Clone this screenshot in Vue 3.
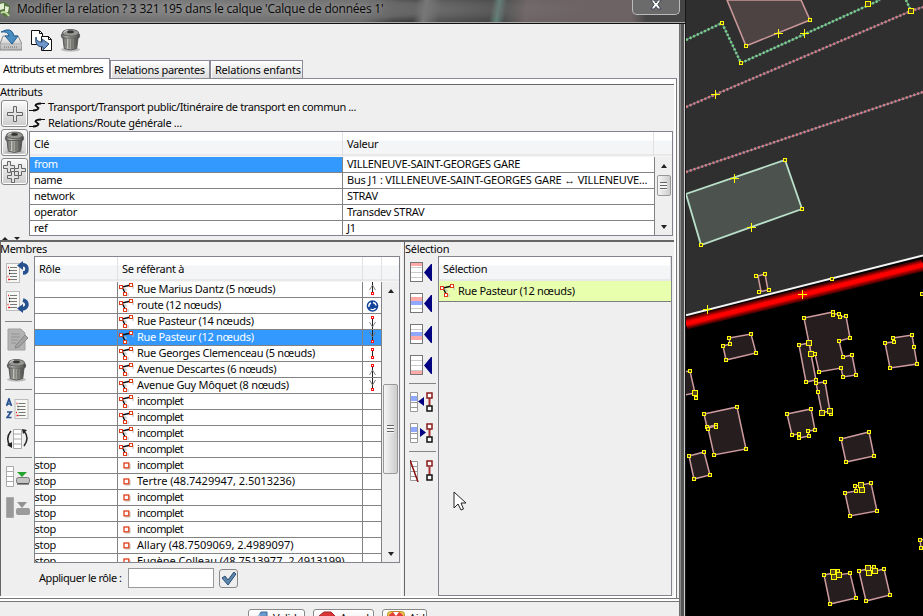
<script setup>
const attributes = [
  ['from', 'VILLENEUVE-SAINT-GEORGES GARE'],
  ['name', 'Bus J1 : VILLENEUVE-SAINT-GEORGES GARE ↔ VILLENEUVE...'],
  ['network', 'STRAV'],
  ['operator', 'Transdev STRAV'],
  ['ref', 'J1'],
]

const members = [
  { ref: 'Rue Marius Dantz (5 nœuds)', link: 'up-end' },
  { ref: 'route (12 nœuds)', link: 'round' },
  { ref: 'Rue Pasteur (14 nœuds)', link: 'down-start' },
  { ref: 'Rue Pasteur (12 nœuds)', link: 'down-end', selected: true },
  { ref: 'Rue Georges Clemenceau (5 nœuds)', link: 'single' },
  { ref: 'Avenue Descartes (6 nœuds)', link: 'up-start' },
  { ref: 'Avenue Guy Môquet (8 nœuds)', link: 'down-end' },
  { ref: 'incomplet' },
  { ref: 'incomplet' },
  { ref: 'incomplet' },
  { ref: 'incomplet' },
  { role: 'stop', ref: 'incomplet' },
  { role: 'stop', ref: 'Tertre (48.7429947, 2.5013236)' },
  { role: 'stop', ref: 'incomplet' },
  { role: 'stop', ref: 'incomplet' },
  { role: 'stop', ref: 'incomplet' },
  { role: 'stop', ref: 'Allary (48.7509069, 2.4989097)' },
  { role: 'stop', ref: 'Eugène Colleau (48.7513977, 2.4913199)' },
]

const insertIcons = [
  { pink: 0 },
  { pink: 4, blue: 8 },
  { blue: 8, pink: 12 },
  { pink: 16 },
]

const buildings = [
  '758,276 765,274 768,290 761,291.5',
  '729,338 751,334 756,353 726,360 723,346 730,344',
  '804,318 833,312 833,314 839,314 840,317 846,316 850,338 839,341 843,357 852,355 856,375 843,377 841,368 819,372 815,354 811,353',
  '799,345 809,343 811,354 816,380 806,382',
  '816,383 825,382 830,411 822,413',
  '885,343 893,342 893,338 912,335 917,364 890,368',
  '680,372 690,371 695,393 680,396',
  '704,414 737,407 746,449 714,455 708,428 716,426 716,425 707,427',
  '787,414 811,409 815,430 808,431 809,436 799,438 799,434 792,435',
  '841,439 869,432 874,456 846,462',
  '689,456 704,452 710,475 694,479',
  '845,493 856,491 855,486 871,483 877,511 850,516',
  '824,575 833,573 838,571 839,575 850,573 856,598 830,604',
  '859,571 867,569 874,567 876,571 884,569 890,595 866,601',
  '920,540 930,538 930,547 921,548',
]

const nodes = [
  [722, 23], [741, 63], [810, 20], [746, 46], [785, 160], [802, 209], [701, 245],
  [756, 276], [765, 274], [769, 290], [759, 292], [832, 279], [922, 294],
  [729, 338], [751, 334], [756, 353], [726, 360], [723, 346], [730, 344],
  [804, 318], [833, 312], [833, 315], [839, 314], [840, 317], [846, 316], [850, 338], [839, 341],
  [843, 357], [852, 355], [856, 375], [843, 377], [841, 368], [819, 372], [815, 354],
  [799, 345], [806, 382], [816, 380], [816, 383], [825, 382], [818, 392], [823, 414], [831, 414],
  [885, 343], [894, 342], [893, 338], [912, 335], [914, 347], [917, 364], [890, 368],
  [690, 371], [696, 398], [704, 414], [737, 407], [746, 449], [714, 455], [707, 427], [716, 425], [716, 427], [708, 429],
  [787, 414], [811, 409], [815, 430], [808, 431], [809, 436], [799, 438], [799, 434], [792, 435],
  [841, 439], [869, 432], [874, 456], [846, 462], [689, 456], [704, 452], [710, 475], [694, 479],
  [845, 493], [856, 491], [855, 486], [871, 483], [877, 511], [850, 516],
  [824, 575], [838, 571], [850, 573], [856, 598], [830, 604],
  [859, 571], [874, 567], [884, 569], [890, 595], [866, 601], [920, 540], [921, 548],
]

const junctions = [
  [868, 4], [911, 11], [809, 343], [811, 354], [695, 393], [822, 413], [830, 411],
  [861, 485], [862, 490], [833, 572], [839, 575], [834, 577], [868, 568], [875, 571], [869, 573],
]

const crosses = [[778, 33], [804, 33], [715, 94], [734, 178], [751, 227], [802, 294], [707, 309]]
</script>

<template>
  <div class="screen">
    <svg class="defs" width="0" height="0" aria-hidden="true">
      <defs>
        <linearGradient id="steel" x1="0" x2="1">
          <stop offset="0" stop-color="#555" /><stop offset=".3" stop-color="#c4c4bf" />
          <stop offset=".65" stop-color="#85857f" /><stop offset="1" stop-color="#444" />
        </linearGradient>
        <linearGradient id="disk" x1="0" y1="0" x2="0" y2="1">
          <stop offset="0" stop-color="#f5f5f5" /><stop offset="1" stop-color="#b5b5b5" />
        </linearGradient>
        <symbol id="trash" viewBox="0 0 22 24">
          <ellipse cx="11" cy="22" rx="10" ry="2" fill="#bbb" />
          <path d="M3 9h16l-1.500 12q-6.500 3-13 0z" fill="url(#steel)" stroke="#555" />
          <path d="M6.500 11v9M9.500 11v10M12.500 11v10M15.500 11v9" stroke="#5b5b57" stroke-width=".8" />
          <rect x="1.500" y="5" width="19" height="5" rx="2" fill="url(#steel)" stroke="#555" />
          <ellipse cx="11" cy="4.500" rx="8.500" ry="3.500" fill="#969692" stroke="#5a5a5a" />
          <ellipse cx="11" cy="3.500" rx="3.500" ry="1.500" fill="#353535" />
          <path d="M4 4q2-2 4-2" stroke="#e4e4e0" fill="none" />
        </symbol>
        <symbol id="way" viewBox="0 0 15 14">
          <path d="M3 4 12 2M3 4 7 11.500" stroke="#111" stroke-width="1.500" fill="none" />
          <path d="M5 6h2v2M13 5h2v-3M9 13v-3" stroke="#bbb" fill="none" />
          <g fill="#fff" stroke="#e03b16" stroke-width="1">
            <rect x=".5" y="2.500" width="3" height="3" /><rect x="10.500" y=".5" width="3" height="3" />
            <rect x="4.500" y="9.500" width="3" height="3" />
          </g>
        </symbol>
        <symbol id="node" viewBox="0 0 15 14">
          <path d="M6 10h5V5" stroke="#bbb" fill="none" />
          <rect x="5" y="4" width="4.800" height="4.800" fill="#fff" stroke="#e03b16" stroke-width="1.300" />
        </symbol>
        <symbol id="list" viewBox="0 0 14 20">
          <rect x=".5" y=".5" width="13" height="19" fill="#f7f7f4" stroke="#bbb" />
          <path d="M4 4.500h7M4 7.500h7M4 10.500h7M4 13.500h7M4 16.500h7" stroke="#777" />
          <path d="M2 4.500h1M1.500 13.500h1M2 16.500h2" stroke="#e22" stroke-width="1.500" />
          <path d="M3 7.500h1M3 10.500h1" stroke="#111" stroke-width="1.500" />
        </symbol>
        <symbol id="plus" viewBox="0 0 18 18">
          <path d="M7.500 1.500h3v6h6v3h-6v6h-3v-6h-6v-3h6z" fill="#e4e4e4" stroke="#666" />
        </symbol>
        <symbol id="preset" viewBox="0 0 16 10">
          <path d="M0 8.500h6M10 1.500h6" fill="none" stroke="#111" stroke-width="1" />
          <path d="M12 1.500Q7 1.500 6.500 3.500L9.500 6Q9 8.300 4 8.500" fill="none" stroke="#111" stroke-width="1.800" />
        </symbol>
      </defs>
    </svg>

    <section class="dialog">
      <header class="titlebar">
        <svg class="app-icon" width="11" height="18" viewBox="0 0 11 18">
          <path d="M0 2 4 1 10 5 9 15 5 16 0 11z" fill="#53743f" />
          <path d="M0 3 4 2 4 8 0 9zM5 5l4 1-1 5H5z" fill="#e4eed2" />
          <path d="M1 12q4-3 8 3" stroke="#bcd695" stroke-width="2" fill="none" />
        </svg>
        <span class="title">Modifier la relation ? 3 321 195 dans le calque 'Calque de données 1'</span>
        <span class="close">
          <svg width="12" height="10" viewBox="0 0 12 10"><path d="M1 0h3l2 3 2-3h3L8 4.500 11 9H8L6 6.500 4 9H1l3-4.500z" fill="#fff" stroke="#3d4252" /></svg>
        </span>
      </header>

      <div class="client">
        <div class="toolbar">
          <svg width="22" height="22" viewBox="0 0 22 22">
            <path d="M3 7h15l4 8v6H0v-6z" fill="url(#disk)" stroke="#888" />
            <path d="M1 15h20" stroke="#aaa" /><path d="M4 18h14" stroke="#999" stroke-width="2" stroke-dasharray="1 1" />
            <path d="M1 3Q12-3 14 7h4l-6 8-7-8h4Q8 2 1 3z" fill="#4a8dc0" stroke="#245e92" />
          </svg>
          <svg width="22" height="23" viewBox="0 0 22 23">
            <path d="M.5 1.500h8l3 3v11H.5z" fill="#fff" stroke="#111" /><path d="M8.500 1.500v3h3" fill="none" stroke="#111" />
            <path d="M10.500 7.500h7l3 3v11h-10z" fill="#fff" stroke="#111" /><path d="M17.500 7.500v3h3" fill="none" stroke="#111" />
            <path d="M5 8q0 5 6 5v-3l7 5-6 6v-3Q3 18 5 8z" fill="#6f96c9" stroke="#274873" />
          </svg>
          <svg class="delete" width="21" height="24"><use href="#trash" /></svg>
        </div>

        <nav class="tabs">
          <span class="tab active">Attributs et membres</span>
          <span class="tab parents">Relations parentes</span>
          <span class="tab children">Relations enfants</span>
        </nav>

        <main class="content">
          <section class="attributes">
            <div class="caption">Attributs</div>
            <div class="attr-body">
              <div class="attr-tools">
                <span class="square"><svg width="18" height="18"><use href="#plus" /></svg></span>
                <span class="square"><svg width="21" height="23"><use href="#trash" /></svg></span>
                <span class="square">
                  <svg width="25" height="24" viewBox="0 0 25 24">
                    <g fill="#e4e4e4" stroke="#666">
                      <path d="M5.500 1.500h3v4h4v3h-4v4h-3v-4h-4v-3h4z" /><path d="M16.500 4.500h3v4h4v3h-4v4h-3v-4h-4v-3h4z" />
                      <path d="M9.500 11.500h3v4h4v3h-4v4h-3v-4h-4v-3h4z" />
                    </g>
                  </svg>
                </span>
              </div>
              <div class="attr-main">
                <div class="preset"><svg width="16" height="10"><use href="#preset" /></svg><span class="path">Transport/Transport public/Itinéraire de transport en commun ...</span></div>
                <div class="preset"><svg width="16" height="10"><use href="#preset" /></svg><span>Relations/Route générale ...</span></div>
                <div class="table attr-table">
                  <div class="thead"><span>Clé</span><span>Valeur</span></div>
                  <div class="tbody">
                    <div class="rows">
                      <div v-for="(a, i) in attributes" :key="a[0]" class="row">
                        <span :class="{ selected: i === 0 }">{{ a[0] }}</span><span :class="{ long: i === 1 }">{{ a[1] }}</span>
                      </div>
                    </div>
                    <div class="scroll">
                      <i class="arrow up"></i><i class="thumb"></i><i class="arrow down"></i>
                    </div>
                  </div>
                </div>
              </div>
            </div>
          </section>

          <div class="divider"><i class="arrow up"></i><i class="arrow down"></i></div>

          <section class="lower">
            <div class="members">
              <div class="caption">Membres</div>
              <div class="members-body">
                <div class="side-tools">
                  <svg width="24" height="23" viewBox="0 0 24 23"><use href="#list" y="2" width="14" height="20" /><path d="M15 4q6-1 6 4 0 4-4 4" fill="none" stroke="#27508f" stroke-width="3.500" /><path d="M17 0v9l-6-4.500z" fill="#27508f" /></svg>
                  <svg width="24" height="23" viewBox="0 0 24 23"><use href="#list" y="0" width="14" height="20" /><path d="M17 9q4 1 4 5-1 4-6 4" fill="none" stroke="#27508f" stroke-width="3.500" /><path d="M17 13v9l-6-4.500z" fill="#27508f" /></svg>
                  <hr />
                  <svg width="24" height="23" viewBox="0 0 24 23"><path d="M2 1h13l4 4v17H2z" fill="#b3b3b3" stroke="#a0a0a0" /><path d="M5 6h9M5 9h9M5 12h7M5 15h5" stroke="#929292" /><path d="m10 17 9-10 3 3-9 9-4 1z" fill="#a2a2a2" stroke="#888" /></svg>
                  <svg width="22" height="24" viewBox="0 0 22 24"><use href="#trash" width="21" height="24" /></svg>
                  <hr />
                  <svg width="24" height="22" viewBox="0 0 24 22"><use href="#list" x="8" y="1" width="15" height="20" /><path d="M.5 8 3 1l2.500 7M1.500 6h3M1 14h4l-4 5.500h4.500" fill="none" stroke="#27508f" stroke-width="1.700" /></svg>
                  <svg width="24" height="22" viewBox="0 0 24 22"><path d="M7.500 1.500h8v19h-8zM7.500 6h8M7.500 11h8M7.500 16h8" fill="#fff" stroke="#aaa" /><path d="M5 3Q-1 10 4 18M18 3q6 7 0 15" fill="none" stroke="#222" stroke-width="1.500" /><path d="m1 17 5 3V14zM16 1l5 1-4 4z" fill="#222" /></svg>
                  <hr />
                  <svg width="24" height="22" viewBox="0 0 24 22"><path d="M.5.500h7v20h-7zM.5 5.500h7M.5 10.500h7M.5 15.500h7" fill="#fff" stroke="#aaa" /><rect x="10.500" y="11.500" width="13" height="6" rx="2" fill="#c3c3c3" stroke="#777" /><path d="M11 18h12" stroke="#333" /><path d="M11 6h10l-5 5z" fill="#24a32e" /></svg>
                  <svg width="24" height="22" viewBox="0 0 24 22"><path d="M.5.500h7v20h-7z" fill="#999" stroke="#aaa" /><rect x="10" y="11" width="14" height="7" rx="2" fill="#9b9b9b" /><path d="M11 5h10l-5 6z" fill="#929292" /></svg>
                </div>
                <div class="table member-table">
                  <div class="thead"><span>Rôle</span><span>Se réfèrant à</span><span></span></div>
                  <div class="tbody">
                    <div class="rows">
                      <div v-for="(m, i) in members" :key="i" class="row" :class="{ selected: m.selected }">
                        <span class="role">{{ m.role }}</span>
                        <span class="ref"><svg width="15" height="14"><use :href="m.role ? '#node' : '#way'" /></svg><em :class="{ coords: i > 11 && m.ref !== 'incomplet', partial: m.ref === 'incomplet' }">{{ m.ref }}</em></span>
                        <span class="link">
                          <svg v-if="m.link" width="15" height="16" viewBox="0 0 15 16">
                            <g v-if="m.link === 'round'">
                              <circle cx="7.500" cy="8" r="5.800" fill="#12439b" /><path d="M4 9a3.500 3.500 0 0 1 2-4M8 4.500a3.500 3.500 0 0 1 3 3M10.500 10a3.500 3.500 0 0 1-5 1" fill="none" stroke="#fff" stroke-width="1.400" />
                            </g>
                            <g v-else>
                              <path v-if="m.link === 'up-end' || m.link === 'down-end'" d="M7.500 0V11" stroke="#222" />
                              <path v-else-if="m.link === 'single'" d="M7.500 4V12" stroke="#222" />
                              <path v-else d="M7.500 5V16" stroke="#222" />
                              <path v-if="m.link === 'up-end'" d="m4.500 8 3-5 3 5" fill="none" stroke="#888" />
                              <path v-if="m.link === 'down-end'" d="m4.500 2 3 5 3-5" fill="none" stroke="#777" />
                              <path v-if="m.link === 'down-start'" d="m4.500 8 3 5 3-5" fill="none" stroke="#888" />
                              <path v-if="m.link === 'up-start'" d="m4.500 13 3-5 3 5" fill="none" stroke="#888" />
                              <rect v-if="m.link !== 'up-end' && m.link !== 'down-end'" x="6.500" y="2.500" width="2" height="2" fill="#fff" stroke="#f11" />
                              <rect v-if="m.link === 'up-end' || m.link === 'down-end' || m.link === 'single'" x="6.500" y="10.500" width="2" height="2" fill="#fff" stroke="#f11" />
                            </g>
                          </svg>
                        </span>
                      </div>
                    </div>
                    <div class="scroll"><i class="arrow up"></i><i class="thumb"></i><i class="arrow down"></i></div>
                  </div>
                </div>
              </div>
              <div class="role-form">
                <label>Appliquer le rôle :</label><span class="input"></span>
                <span class="apply"><svg width="16" height="15" viewBox="0 0 16 15"><path d="m1 7 3-2 3 4 6-8 2 2-8 11z" fill="#5d86ad" stroke="#284d72" /></svg></span>
              </div>
            </div>

            <div class="selection">
              <div class="caption">Sélection</div>
              <div class="selection-body">
                <div class="side-tools">
                  <svg v-for="(s, i) in insertIcons" :key="i" width="23" height="21" viewBox="0 0 23 21">
                    <rect x="1" y=".5" width="12" height="19" fill="#fff" />
                    <path d="M1 5.500h12M1 10.500h12M1 15.500h12" stroke="#ccc" />
                    <rect v-if="s.pink !== undefined" x="1" :y="s.pink" width="12" height="4" fill="#ffa9a9" />
                    <rect v-if="s.blue" x="1" :y="s.blue" width="12" height="4" fill="#91a8ff" />
                    <rect x=".5" y=".5" width="12" height="19" fill="none" stroke="#777" />
                    <path d="M22 2v17h-1l-7-8.500L21 2z" fill="#000080" />
                  </svg>
                  <hr />
                  <svg v-for="d in ['left', 'right']" :key="d" width="23" height="21" viewBox="0 0 23 21">
                    <path d="M.5.500h7v19h-7zM.5 10.500h7M.5 15.500h7" fill="#fff" stroke="#999" /><rect x="1" y="4" width="6" height="5" fill="#91a8ff" />
                    <path v-if="d === 'left'" d="M14 5v9L8 9.500z" fill="#000080" /><path v-else d="M10 5v9l6-4.500z" fill="#000080" />
                    <path d="M19.500 6v8" stroke="#a33" stroke-width="2" /><rect x="17" y="1" width="5" height="5" fill="#fff" stroke="#8b1a1a" stroke-width="1.500" /><rect x="17" y="14" width="5" height="5" fill="#fff" stroke="#111" stroke-width="1.500" />
                  </svg>
                  <hr />
                  <svg width="23" height="22" viewBox="0 0 23 22">
                    <path d="M.5 1.500h7v19h-7zM.5 6.500h7M.5 11.500h7M.5 16.500h7" fill="#fff" stroke="#999" /><path d="m0 0 8 22" stroke="#8b1111" stroke-width="1.500" />
                    <path d="M19.500 7v8" stroke="#a33" stroke-width="2" /><rect x="17" y="1" width="5" height="5" fill="#fff" stroke="#8b1a1a" stroke-width="1.500" /><rect x="17" y="15" width="5" height="5" fill="#fff" stroke="#111" stroke-width="1.500" />
                  </svg>
                </div>
                <div class="table selection-table">
                  <div class="thead"><span>Sélection</span></div>
                  <div class="picked"><svg width="15" height="14"><use href="#way" /></svg><span>Rue Pasteur (12 nœuds)</span></div>
                </div>
              </div>
            </div>
          </section>
        </main>

        <footer class="actions">
          <button class="ok"><svg width="16" height="16" viewBox="0 0 16 16"><path d="M8 1h6v12H1V6h4z" fill="#6a9acb" stroke="#376a9e" /><path d="M1 7l6-4v8z" fill="#9fc1e0" /></svg>Valider</button>
          <button class="cancel"><svg width="18" height="18" viewBox="0 0 18 18"><path d="M6 1h7l4 4v8l-4 4H6l-5-4V5z" fill="#d9363a" stroke="#a31d22" /><path d="m6 6 6 6m0-6-6 6" stroke="#fff" stroke-width="2" /></svg>Annuler</button>
          <button class="help"><svg width="18" height="18" viewBox="0 0 18 18"><rect x=".5" y=".5" width="17" height="16" rx="3" fill="#f0d058" stroke="#b89325" /><circle cx="9" cy="9" r="6" fill="none" stroke="#e3423b" stroke-width="5" /><path d="M6 1 9 5l3-4z" fill="#fff" /></svg>Aide</button>
        </footer>
      </div>
    </section>

    <svg class="map" width="237" height="616" viewBox="686 0 237 616">
      <rect x="686" width="237" height="616" fill="#000" />
      <path d="M686 0H923V255L686 315z" fill="#2f2f2f" />
      <path d="M727 0 746 46 810 20 801 0z" fill="#4d4343" stroke="#c99797" stroke-width="1.600" />
      <path d="M686 194 785 160 802 209 701 245z" fill="#4c534e" stroke="#b9dfc9" stroke-width="1.800" />
      <g fill="none">
        <path d="M686 40 722 23 741 63 880 0M906 0 911 11" stroke="#668b91" stroke-width="1.200" />
        <path d="M686 40 722 23 741 63 880 0M906 0 911 11" stroke="#79cf86" stroke-width="2.600" stroke-dasharray="2 2" />
        <path d="M686 107 911 11 923 7M686 172 923 92" stroke="#737d96" stroke-width="1.200" />
        <path d="M686 107 911 11 923 7M686 172 923 92" stroke="#d57c80" stroke-width="2.600" stroke-dasharray="2 2" />
        <path d="M686 323.500 923 265" stroke="#560000" stroke-width="12" />
        <path d="M686 323.500 923 265" stroke="#8c0000" stroke-width="9" />
        <path d="M686 323.500 923 265" stroke="#c80000" stroke-width="6.500" />
        <path d="M686 323.500 923 265" stroke="#f00" stroke-width="4" />
        <path d="M686 315.200 923 255.500" stroke="#f4f4f4" stroke-width="2" />
      </g>
      <g stroke="#cd9a9d" stroke-width="1.500" fill="#261e1e">
        <polygon v-for="(b, i) in buildings" :key="i" :points="b" />
      </g>
      <g fill="#534723" stroke="#ff0" stroke-width="1">
        <rect v-for="(n, i) in nodes" :key="i" :x="n[0] - 1.5" :y="n[1] - 1.5" width="3" height="3" />
        <rect v-for="(n, i) in junctions" :key="'j' + i" :x="n[0] - 2.5" :y="n[1] - 2.5" width="5" height="5" />
      </g>
      <path v-for="(c, i) in crosses" :key="i" :d="`M${c[0] - 4} ${c[1] + .5}h9M${c[0] + .5} ${c[1] - 4}v9`" stroke="#ff0" />
    </svg>

    <svg class="cursor" width="14" height="21" viewBox="0 0 14 21"><path d="M1 1v16l4-4 3 6 2.500-1L8 12h5z" fill="#fff" stroke="#222" /></svg>
  </div>
</template>

<style>
body { overflow: hidden; }
</style>

<style scoped>
* { box-sizing: border-box; }
.screen { position: relative; display: flex; width: 923px; height: 616px; overflow: hidden; background: #000; color: #080808; font: 11px/16px "Noto Sans", "Open Sans", sans-serif; white-space: nowrap; letter-spacing: -.3px; }
svg { display: block; flex: none; }
.defs { position: absolute; }
.dialog { width: 686px; height: 616px; flex: none; border-right: 1px solid #171717; background: linear-gradient(90deg, #222 679px, #bbb 680px, #555 681px 684px, #ccc 684px); }
.titlebar { display: flex; align-items: flex-start; height: 24px; border-bottom: 1px solid #111; box-shadow: inset 0 -1px #aaa; background: radial-gradient(ellipse 400px 22px at 190px 9px, #858585 0, #777777d0 60%, transparent 100%), linear-gradient(100deg, #565656 0 360px, #111 390px 410px, #777 420px, #3d3d3d 435px 485px, #5b8278 492px, #484848 500px, #6e6364 520px 625px, #454545 640px); }
.app-icon { margin-top: 1px; }
.title { margin: 1px 0 0 6px; width: 600px; font: 12px/16px "Open Sans", sans-serif; letter-spacing: -.21px; text-shadow: 0 0 5px #aaa; }
.close { width: 48px; height: 15px; margin-left: 15px; flex: none; border: 1px solid #bbb; border-top: 0; border-radius: 0 0 5px 5px; display: flex; justify-content: center; background: #6b6b6b; }
.client { width: 679px; height: 592px; background: #efefef; display: flex; flex-direction: column; }
.toolbar { height: 34px; display: flex; align-items: flex-start; gap: 9px; padding-top: 5px; flex: none; }
.toolbar .delete { margin: -1px 0 0 -2px; }
.tabs { display: flex; align-items: flex-end; height: 21px; flex: none; border-bottom: 1px solid #8a8b96; width: 677px; }
.tab { border: 1px solid #8a8b96; border-bottom: 0; height: 18px; line-height: 18px; padding-left: 3px; background: linear-gradient(#fff, #ddd); box-shadow: inset 1px 1px #fff; }
.tab.active { width: 110px; height: 21px; margin-bottom: -1px; border-left: 0; background: #fff; line-height: 19px; letter-spacing: -.5px; }
.parents { width: 100px; }
.children { width: 93px; padding-left: 4px; letter-spacing: -.22px; }
.content { width: 677px; height: 519px; flex: none; padding-top: 5px; border-right: 1px solid #777; background: #fff; }
.attributes { height: 152px; width: 674px; border-top: 1px solid #666; background: #efefef; }
.caption { height: 15px; line-height: 13px; }
.attr-body { display: flex; height: 136px; }
.attr-tools { width: 29px; padding-left: 1px; display: flex; flex-direction: column; gap: 2px; flex: none; }
.square { width: 27px; height: 27px; border: 1px solid #888; border-radius: 3px; background: linear-gradient(#fafafa, #ccc); box-shadow: inset 0 0 0 1px #fff; display: flex; align-items: center; justify-content: center; }
.attr-main { width: 644px; }
.preset { display: flex; align-items: flex-start; gap: 3px; height: 15.500px; line-height: 13px; }
.preset svg { margin-top: 2px; }
.path { letter-spacing: -.4px; }
.table { border: 1px solid #82838b; background: #fff; overflow: hidden; }
.thead { display: grid; height: 25px; line-height: 24px; padding-bottom: 1px; background: linear-gradient(#fff 0 8px, #f4f5f7 9px 22px, #ddd 23px, #f5f5f5 24px); }
.thead span { padding-left: 4px; border-right: 1px solid #e1e1e4; }
.tbody { display: flex; }
.row { display: grid; height: 16px; line-height: 13px; border-bottom: 1px solid #828282; }
.row > span { height: 15px; border-right: 1px solid #828282; overflow: hidden; }
.long { letter-spacing: -.19px; }
.selected { background: #3399ff; color: #fff; }
.attr-table { height: 105px; }
.attr-table .thead { grid-template-columns: 313px 311px; }
.attr-table .row { grid-template-columns: 313px 312px; }
.attr-table .row > span { padding-left: 4px; }
.scroll { width: 17px; flex: 1; background: #efefef; display: flex; flex-direction: column; align-items: center; }
.arrow { width: 0; height: 0; border: 3px solid transparent; flex: none; }
.arrow.up { border-bottom: 4px solid #222; border-top: 0; }
.arrow.down { border-top: 4px solid #222; border-bottom: 0; }
.thumb { width: 14px; border: 1px solid #999; border-radius: 2px; background: repeating-linear-gradient(#666 0 1px, #f5f5f5 1px 3px) center / 7px 8px no-repeat, linear-gradient(90deg, #f5f5f5, #ccc); flex: none; }
.attr-table .scroll { height: 79px; }
.attr-table .up { margin-top: 7px; }
.attr-table .thumb { height: 21px; margin-top: 7px; }
.attr-table .down { margin-top: 29px; }
.divider { height: 4px; width: 674px; background: #efefef; display: flex; gap: 6px; padding: 1px 0 0 2px; }
.divider .arrow { border-width: 3px; }
.divider .arrow.up { border-top: 0; }
.divider .arrow.down { border-bottom: 0; }
.lower { display: flex; width: 674px; height: 356px; background: #efefef; border-top: 2px solid #666; }
.members { width: 402px; border-left: 1px solid #666; flex: none; border-right: 1px solid #fff; }
.lower .caption { height: 14px; line-height: 14px; }
.members .caption { margin-left: -1px; }
.members-body, .selection-body { display: flex; }
.side-tools { display: flex; flex-direction: column; flex: none; }
.side-tools hr { width: 27px; border: 0; border-top: 1px solid #858585; margin: 0 0 0 -1px; height: 1px; }
.members .side-tools { width: 33px; padding: 5px 0 0 5px; }
.members .side-tools svg:nth-child(2) { margin: 7px 0; }
.members .side-tools svg:nth-child(4) { margin: 6px 0 7px; }
.members .side-tools svg:nth-child(5) { margin-bottom: 7px; }
.members .side-tools svg:nth-child(7) { margin: 8px 0; }
.members .side-tools svg:nth-child(8) { margin-bottom: 7px; }
.members .side-tools svg:nth-child(10) { margin: 8px 0 9px; }
.member-table { width: 366px; height: 307px; }
.member-table .thead { grid-template-columns: 83px 245px 19px; }
.member-table .rows { height: 281px; overflow: hidden; }
.member-table .row { grid-template-columns: 83px 245px 19px; }
.role { text-indent: -.5px; }
.ref, .picked { display: flex; align-items: center; }
.ref { padding-left: 1px; gap: 3px; }
.ref em { height: 15px; font-style: normal; }
.coords { letter-spacing: -.02px; }
.partial { letter-spacing: -.6px; }
.link { display: flex; justify-content: center; }
.member-table .scroll { height: 280px; }
.member-table .up { margin-top: 7px; }
.member-table .thumb { height: 90px; margin-top: 91px; width: 15px; }
.member-table .down { margin-top: 78px; }
.role-form { display: flex; align-items: center; height: 30px; padding-left: 38px; }
.role-form label { width: 89px; letter-spacing: -.45px; }
.input { width: 86px; height: 20px; border: 1px solid #999; background: #fff; }
.apply { display: flex; align-items: center; justify-content: center; width: 19px; height: 19px; margin-left: 5px; border: 1px solid #888; border-radius: 3px; background: #eee; }
.selection { width: 270px; margin-left: 2px; border-left: 1px solid #666; flex: none; }
.selection .side-tools { width: 33px; padding: 6px 0 0 5px; }
.selection .side-tools svg { margin-bottom: 10px; }
.selection .side-tools svg:nth-child(4) { margin-bottom: 7px; }
.selection .side-tools hr { margin-bottom: 8px; }
.selection .side-tools svg:nth-child(7) { margin-bottom: 7px; }
.selection-table { width: 234px; height: 340px; background: #efefef; }
.picked { height: 21px; margin-top: -1px; gap: 3px; padding-left: 1px; border-bottom: 1px solid #7d7d7d; background: #e8ffae; }
.actions { display: flex; flex: 1; align-items: flex-start; gap: 8px; padding: 10px 0 0 248px; border-top: 1px solid #777; box-shadow: inset 0 2px #fff, inset 0 3px #777; }
.actions button { display: flex; height: 25px; padding: 0 4px; border: 1px solid #888; border-radius: 3px; background: linear-gradient(#fff, #ddd); box-shadow: inset 0 0 0 1px #fff; font: inherit; letter-spacing: inherit; color: inherit; gap: 4px; }
.actions svg { margin-top: 1px; }
.ok { width: 57px; }
.cancel { width: 61px; }
.help { width: 45px; }
.cursor { position: absolute; left: 453px; top: 491px; }
</style>
